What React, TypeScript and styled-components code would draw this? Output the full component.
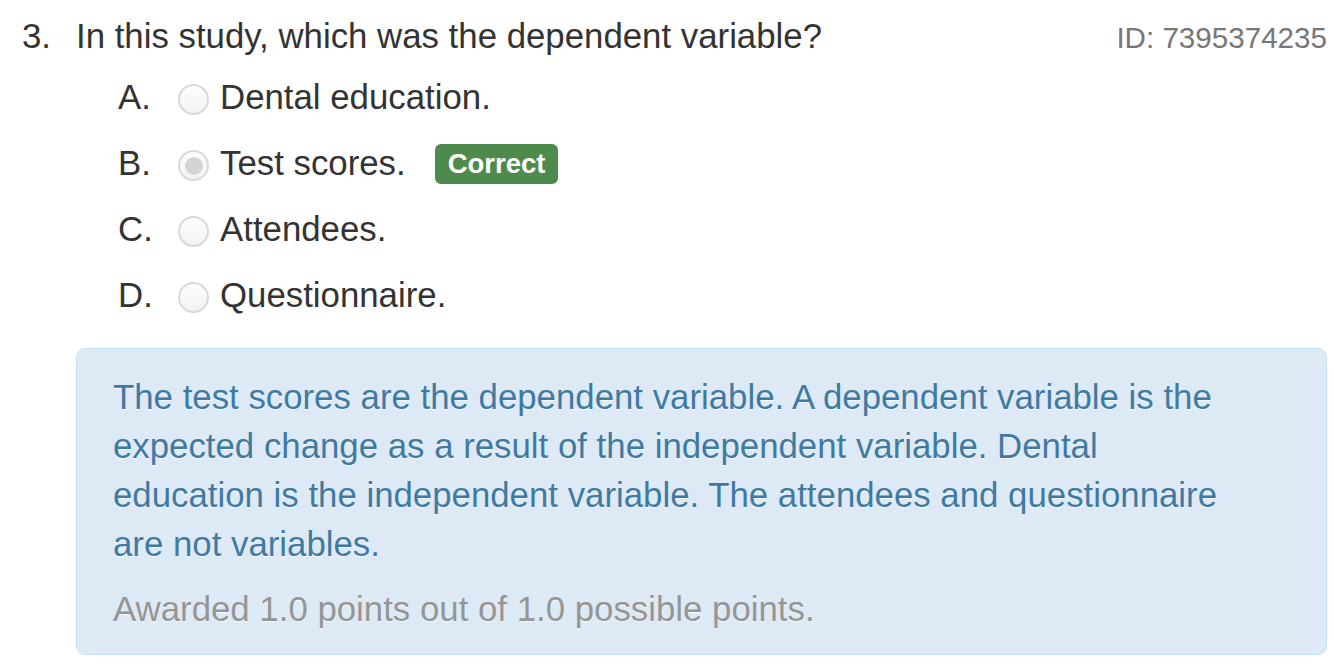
import React from 'react'
import styled, { createGlobalStyle } from 'styled-components'

const GlobalStyle = createGlobalStyle`
  html, body {
    margin: 0;
    padding: 0;
    background: #fff;
  }
  body {
    font-family: 'Liberation Sans', Arial, Helvetica, sans-serif;
    font-size: 34.8px;
    line-height: 49px;
    color: #333;
  }
`

const Page = styled.div`
  padding: 11px 7px 0 22px;
`

const QuestionRow = styled.div`
  display: flex;
  align-items: baseline;
`

const Number = styled.span`
  width: 54px;
  flex: none;
`

const QuestionText = styled.span`
  flex: 1;
`

const QuestionId = styled.span`
  font-size: 29.6px;
  color: #777;
`

const Options = styled.ul`
  list-style: none;
  margin: 10px 0 0;
  padding: 0 0 0 96px;
  display: flex;
  flex-direction: column;
  gap: 17px;
`

const Option = styled.li`
  display: flex;
  align-items: center;
  height: 49px;
`

const Letter = styled.span`
  width: 60px;
  flex: none;
`

const Radio = styled.span<{ $checked?: boolean }>`
  box-sizing: border-box;
  width: 31px;
  height: 31px;
  flex: none;
  margin: 6px 11px 0 0;
  border-radius: 50%;
  border: 2px solid #d9d9d9;
  background: linear-gradient(#fdfdfd, #f2f2f2);
  display: flex;
  align-items: center;
  justify-content: center;

  &::after {
    content: '';
    display: ${(p) => (p.$checked ? 'block' : 'none')};
    width: 18px;
    height: 18px;
    border-radius: 50%;
    background: #d4d4d4;
  }
`

const Badge = styled.span`
  margin-left: 29px;
  margin-top: 2px;
  height: 40px;
  padding: 0 13px;
  display: inline-flex;
  align-items: center;
  background: #4e8a4b;
  color: #fff;
  font-weight: bold;
  font-size: 27.5px;
  border-radius: 6px;
`

const Alert = styled.div`
  margin: 29px 0 0 54px;
  padding: 23px 80px 21px 36px;
  background: #ddeaf5;
  border: 1.5px solid #c4e3f0;
  border-radius: 9px;
  color: #3f7aa2;
  text-shadow: 0 1px 0 rgba(255, 255, 255, 0.7);
`

const Explanation = styled.p`
  margin: 0;
`

const Points = styled.p`
  margin: 16px 0 0;
  color: #959595;
`

const options = [
  { letter: 'A.', text: 'Dental education.' },
  { letter: 'B.', text: 'Test scores.', checked: true, correct: true },
  { letter: 'C.', text: 'Attendees.' },
  { letter: 'D.', text: 'Questionnaire.' },
]

const App = () => (
  <Page>
    <GlobalStyle />
    <QuestionRow>
      <Number>3.</Number>
      <QuestionText>In this study, which was the dependent variable?</QuestionText>
      <QuestionId>ID: 7395374235</QuestionId>
    </QuestionRow>
    <Options>
      {options.map((o) => (
        <Option key={o.letter}>
          <Letter>{o.letter}</Letter>
          <Radio $checked={o.checked} />
          <span>{o.text}</span>
          {o.correct && <Badge>Correct</Badge>}
        </Option>
      ))}
    </Options>
    <Alert>
      <Explanation>
        The test scores are the dependent variable. A dependent variable is the expected change as a
        result of the independent variable. Dental education is the independent variable. The
        attendees and questionnaire are not variables.
      </Explanation>
      <Points>Awarded 1.0 points out of 1.0 possible points.</Points>
    </Alert>
  </Page>
)

export default App
